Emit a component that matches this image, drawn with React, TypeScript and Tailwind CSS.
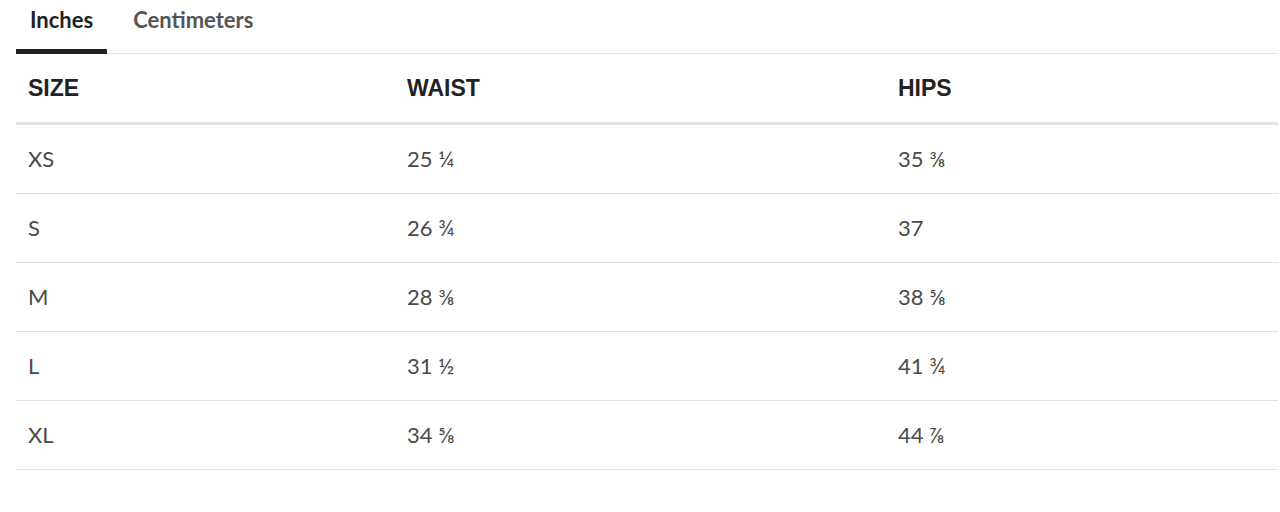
const rows = [
  { size: 'XS', waist: '25 ¼', hips: '35 ⅜' },
  { size: 'S', waist: '26 ¾', hips: '37' },
  { size: 'M', waist: '28 ⅜', hips: '38 ⅝' },
  { size: 'L', waist: '31 ½', hips: '41 ¾' },
  { size: 'XL', waist: '34 ⅝', hips: '44 ⅞' },
];

const cols = 'grid grid-cols-[379px_491px_1fr]';

export default function App() {
  return (
    <div className="min-h-[512px] bg-white pl-4 pr-[2px] font-['Lato',sans-serif]">
      <div className="flex border-b border-[#e3e3e3]">
        <button className="-mb-px h-[54px] border-b-[5px] border-[#222] px-[14px] pb-[10px] text-[22px] font-bold text-[#222]">
          Inches
        </button>
        <button className="-mb-px ml-[12px] h-[54px] border-b-[5px] border-transparent px-[14px] pb-[10px] text-[22px] font-bold text-[#555]">
          Centimeters
        </button>
      </div>

      <div className={`${cols} h-[71px] items-center border-b-[3px] border-[#e3e3e3] font-['Liberation_Sans',sans-serif] text-[23px] font-bold text-[#222]`}>
        <div className="pl-3 pt-[1px]">SIZE</div>
        <div className="pl-3 pt-[1px]">WAIST</div>
        <div className="pl-3 pt-[1px]">HIPS</div>
      </div>

      {rows.map((r) => (
        <div
          key={r.size}
          className={`${cols} h-[69px] items-center border-b border-[#e3e3e3] text-[22px] text-[#4a4a4a]`}
        >
          <div className="pl-3 pb-[2px]">{r.size}</div>
          <div className="pl-3 pb-[2px]">{r.waist}</div>
          <div className="pl-3 pb-[2px]">{r.hips}</div>
        </div>
      ))}
    </div>
  );
}
